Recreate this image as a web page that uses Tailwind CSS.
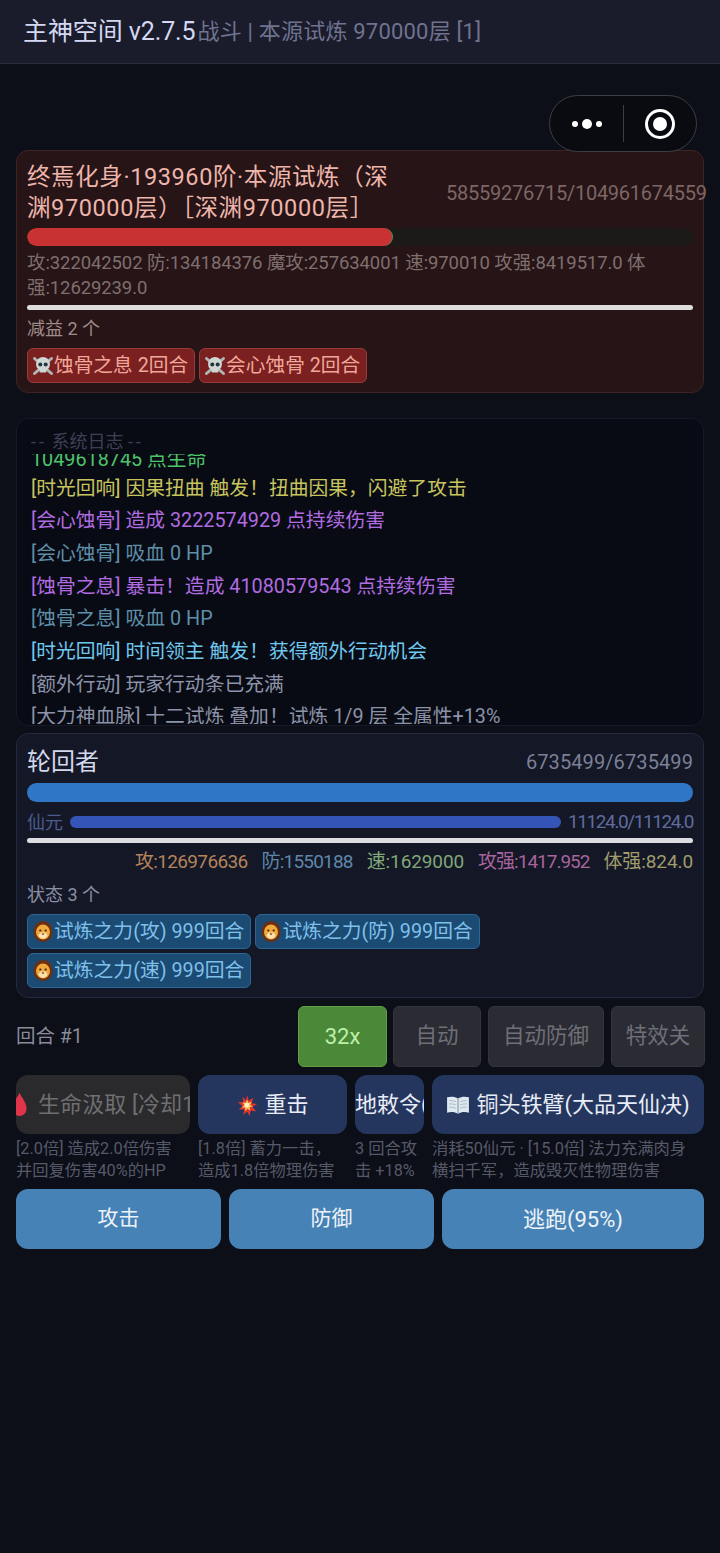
<!DOCTYPE html>
<html lang="zh-CN">
<head>
  <meta charset="UTF-8" />
  <title>主神空间</title>
  <script src="https://cdn.jsdelivr.net/npm/@tailwindcss/browser@4"></script>
</head>
<body class="relative w-[720px] h-[1553px] overflow-hidden bg-[#0c0e18] font-['Roboto','Noto_Sans_CJK_SC',sans-serif] text-white">

  <!-- top bar -->
  <header class="flex items-center h-[64px] pl-[23px] bg-[#1a1c2b] border-b border-[#2a2c3e]">
    <span class="text-[25px] text-[#d4d8f2] whitespace-nowrap tracking-[-0.1px]">主神空间 v2.7.5</span>
    <span class="ml-[2px] text-[22px] text-[#6f7390] whitespace-nowrap tracking-[0.2px]">战斗 | 本源试炼 970000层 [1]</span>
  </header>

  <!-- wechat capsule -->
  <div class="absolute left-[549px] top-[95px] flex items-center w-[148px] h-[57px] rounded-full bg-[#0a0b10] border border-[#3c3d45]">
    <div class="flex items-center justify-center gap-[4px] w-[73px]">
      <span class="w-[6px] h-[6px] rounded-full bg-white"></span>
      <span class="w-[10px] h-[10px] rounded-full bg-white"></span>
      <span class="w-[6px] h-[6px] rounded-full bg-white"></span>
    </div>
    <div class="w-px h-[37px] bg-[#3c3d45]"></div>
    <div class="flex items-center justify-center flex-1">
      <div class="flex items-center justify-center w-[30px] h-[30px] rounded-full border-[3px] border-white">
        <span class="w-[14px] h-[14px] rounded-full bg-white"></span>
      </div>
    </div>
  </div>

  <main class="px-[16px] pt-[86px]">
    <!-- enemy -->
    <section class="h-[243px] px-[10px] pt-[11px] rounded-[12px] bg-[#261416] border border-[#3f2424]">
      <div class="flex items-center">
        <div class="w-[419px] shrink-0 text-[23.500px] leading-[31px] tracking-[0.6px] text-[#eeb5ab] whitespace-nowrap">终焉化身·193960阶·本源试炼（深<br>渊970000层）［深渊970000层］</div>
        <div class="text-[20px] text-[#7d6665] whitespace-nowrap tracking-[-0.25px]">58559276715/104961674559</div>
      </div>
      <div class="mt-[4px] h-[18px] rounded-full bg-[#1c1a18] overflow-hidden">
        <div class="w-[55%] h-full rounded-full bg-[#c93232] border-r border-[#4f8f5a]"></div>
      </div>
      <p class="mt-[5px] text-[18.500px] leading-[25px] text-[#7f6f6e] tracking-[-0.1px]">攻:322042502 防:134184376 魔攻:257634001 速:970010 攻强:8419517.0 体强:12629239.0</p>
      <div class="mt-[4px] h-[5px] rounded-full bg-[#dddddd]"></div>
      <p class="mt-[7px] text-[18px] leading-[24px] text-[#a08c8a]">减益 2 个</p>
      <div class="flex gap-[4px] mt-[7px]">
        <span class="flex items-center h-[35px] pl-[4px] pr-[6px] rounded-[6px] bg-[#7a2020] border border-[#983a3a] text-[19.700px] text-[#f0a79a] whitespace-nowrap">
          <svg class="w-[22px] h-[22px]" viewBox="0 0 22 22"><g stroke="#aeb8b4" stroke-width="3" stroke-linecap="round"><path d="M2.500 3.500l17 15M19.500 3.500l-17 15"/></g><circle cx="11" cy="9" r="7" fill="#cfd6d3"/><rect x="7.500" y="13" width="7" height="4.500" rx="1" fill="#cfd6d3"/><circle cx="8.300" cy="9.500" r="2" fill="#22343c"/><circle cx="13.700" cy="9.500" r="2" fill="#22343c"/></svg>蚀骨之息 2回合</span>
        <span class="flex items-center h-[35px] pl-[4px] pr-[6px] rounded-[6px] bg-[#7a2020] border border-[#983a3a] text-[19.700px] text-[#f0a79a] whitespace-nowrap">
          <svg class="w-[22px] h-[22px]" viewBox="0 0 22 22"><g stroke="#aeb8b4" stroke-width="3" stroke-linecap="round"><path d="M2.500 3.500l17 15M19.500 3.500l-17 15"/></g><circle cx="11" cy="9" r="7" fill="#cfd6d3"/><rect x="7.500" y="13" width="7" height="4.500" rx="1" fill="#cfd6d3"/><circle cx="8.300" cy="9.500" r="2" fill="#22343c"/><circle cx="13.700" cy="9.500" r="2" fill="#22343c"/></svg>会心蚀骨 2回合</span>
      </div>
    </section>

    <!-- log -->
    <section class="mt-[25px] h-[308px] px-[14px] pt-[10px] rounded-[12px] bg-[#090b14] border border-[#171a26]">
      <p class="text-[18px] leading-[25px] text-[#3d4054]"><span class="tracking-[3px]">--</span> 系统日志 <span class="tracking-[3px]">--</span></p>
      <div class="h-[270px] overflow-hidden text-[19.800px] leading-[32.700px] whitespace-nowrap">
        <div class="-mt-[8.500px]">
          <p class="leading-[27px] text-[#4ec46a]">1049618745 点生命</p>
          <p class="text-[#c7c45e]">[时光回响] 因果扭曲 触发！扭曲因果，闪避了攻击</p>
          <p class="text-[#b06ce0]">[会心蚀骨] 造成 3222574929 点持续伤害</p>
          <p class="text-[#5e8fa8]">[会心蚀骨] 吸血 0 HP</p>
          <p class="text-[#b06ce0]">[蚀骨之息] 暴击！造成 41080579543 点持续伤害</p>
          <p class="text-[#5e8fa8]">[蚀骨之息] 吸血 0 HP</p>
          <p class="text-[#6fc8ee]">[时光回响] 时间领主 触发！获得额外行动机会</p>
          <p class="text-[#8c93a8]">[额外行动] 玩家行动条已充满</p>
          <p class="text-[#8c93a8]">[大力神血脉] 十二试炼 叠加！试炼 1/9 层 全属性+13%</p>
        </div>
      </div>
    </section>

    <!-- player -->
    <section class="mt-[7px] h-[265px] px-[10px] pt-[11px] rounded-[12px] bg-[#131726] border border-[#232a40]">
      <div class="flex items-center justify-between h-[33px]">
        <span class="text-[24px] text-[#d4d8ec]">轮回者</span>
        <span class="text-[20px] text-[#7b8096] tracking-[0.1px]">6735499/6735499</span>
      </div>
      <div class="mt-[5px] h-[19px] rounded-full bg-[#2f76c6]"></div>
      <div class="flex items-center gap-[7px] mt-[8px] h-[24px]">
        <span class="text-[18px] text-[#4d5c8c]">仙元</span>
        <div class="flex-1 h-[12px] rounded-full bg-[#3554b8]"></div>
        <span class="text-[19px] text-[#5f6c9c] tracking-[-1.400px]">11124.0/11124.0</span>
      </div>
      <div class="mt-[4px] h-[5px] rounded-full bg-[#dcdde2]"></div>
      <div class="flex justify-end gap-[14px] mt-[6px] text-[19px] leading-[25px]">
        <span class="text-[#b5835a] tracking-[-0.650px]">攻:126976636</span>
        <span class="text-[#5f86a8] tracking-[-0.800px]">防:1550188</span>
        <span class="text-[#80a878] tracking-[-0.100px]">速:1629000</span>
        <span class="text-[#a8649c] tracking-[-1px]">攻强:1417.952</span>
        <span class="text-[#a09c6c] tracking-[-0.100px]">体强:824.0</span>
      </div>
      <p class="mt-[9px] text-[18px] leading-[24px] text-[#8a8fa3]">状态 3 个</p>
      <div class="flex flex-wrap gap-x-[4px] gap-y-[4px] mt-[7px] w-[520px]">
        <span class="flex items-center h-[35px] pl-[4px] pr-[6px] rounded-[6px] bg-[#1b4a73] border border-[#2d6594] text-[19.800px] text-[#7fc0ea] whitespace-nowrap">
          <svg class="w-[22px] h-[22px]" viewBox="0 0 22 22"><ellipse cx="11" cy="10.500" rx="9.500" ry="10.500" fill="#6b2f12"/><ellipse cx="11" cy="11" rx="7" ry="7.500" fill="#f2a93b"/><path d="M6.500 14c1 5 8 5 9 0l-2-2.500h-5z" fill="#fbe3b0"/><circle cx="8.300" cy="9.500" r="1.100" fill="#3a2010"/><circle cx="13.700" cy="9.500" r="1.100" fill="#3a2010"/><path d="M9.500 12.500h3L11 14.200z" fill="#5a2a12"/></svg>试炼之力(攻) 999回合</span>
        <span class="flex items-center h-[35px] pl-[4px] pr-[6px] rounded-[6px] bg-[#1b4a73] border border-[#2d6594] text-[19.800px] text-[#7fc0ea] whitespace-nowrap">
          <svg class="w-[22px] h-[22px]" viewBox="0 0 22 22"><ellipse cx="11" cy="10.500" rx="9.500" ry="10.500" fill="#6b2f12"/><ellipse cx="11" cy="11" rx="7" ry="7.500" fill="#f2a93b"/><path d="M6.500 14c1 5 8 5 9 0l-2-2.500h-5z" fill="#fbe3b0"/><circle cx="8.300" cy="9.500" r="1.100" fill="#3a2010"/><circle cx="13.700" cy="9.500" r="1.100" fill="#3a2010"/><path d="M9.500 12.500h3L11 14.200z" fill="#5a2a12"/></svg>试炼之力(防) 999回合</span>
        <span class="flex items-center h-[35px] pl-[4px] pr-[6px] rounded-[6px] bg-[#1b4a73] border border-[#2d6594] text-[19.800px] text-[#7fc0ea] whitespace-nowrap">
          <svg class="w-[22px] h-[22px]" viewBox="0 0 22 22"><ellipse cx="11" cy="10.500" rx="9.500" ry="10.500" fill="#6b2f12"/><ellipse cx="11" cy="11" rx="7" ry="7.500" fill="#f2a93b"/><path d="M6.500 14c1 5 8 5 9 0l-2-2.500h-5z" fill="#fbe3b0"/><circle cx="8.300" cy="9.500" r="1.100" fill="#3a2010"/><circle cx="13.700" cy="9.500" r="1.100" fill="#3a2010"/><path d="M9.500 12.500h3L11 14.200z" fill="#5a2a12"/></svg>试炼之力(速) 999回合</span>
      </div>
    </section>

    <!-- controls -->
    <div class="flex items-center mt-[8px] h-[61px] w-[689px]">
      <span class="text-[19.500px] text-[#8a8c98] mr-auto">回合 #1</span>
      <button class="w-[89px] h-full rounded-[6px] bg-[#4b8838] border border-[#5f9f48] text-[22px] text-[#bdf0a8]">32x</button>
      <button class="ml-[6px] w-[88px] h-full rounded-[6px] bg-[#2a2b33] border border-[#33343c] text-[21.500px] text-[#6e6f78]">自动</button>
      <button class="ml-[7px] w-[116px] h-full rounded-[6px] bg-[#2a2b33] border border-[#33343c] text-[21.500px] text-[#6e6f78]">自动防御</button>
      <button class="ml-[7px] w-[94px] h-full rounded-[6px] bg-[#2a2b33] border border-[#33343c] text-[21.500px] text-[#6e6f78]">特效关</button>
    </div>

    <!-- skills -->
    <div class="flex gap-[8px] mt-[8px]">
      <div class="w-[174px]">
        <div class="flex items-center h-[59px] rounded-[12px] bg-[#2a2a2c] overflow-hidden text-[22px] text-[#6f6f72] whitespace-nowrap">
          <svg class="shrink-0 -ml-[4px] mr-[11px] w-[15px] h-[26px]" viewBox="0 0 15 26"><path d="M7.500 1c3 6 7 9 7 16a7 7 0 0 1-14 0C.5 10 4.500 7 7.500 1z" fill="#e0344a"/></svg>
          <span class="tracking-[0.1px]">生命汲取 [冷却1]</span>
        </div>
        <p class="mt-[4px] text-[16.300px] leading-[21.500px] text-[#565a68] whitespace-nowrap">[2.0倍] 造成2.0倍伤害<br>并回复伤害40%的HP</p>
      </div>
      <div class="w-[149px]">
        <div class="flex items-center justify-center h-[59px] rounded-[12px] bg-[#24365e] text-[22px] text-[#e8ecf6] whitespace-nowrap">
          <svg class="mr-[6px] w-[22px] h-[24px]" viewBox="0 0 24 24"><path d="M12 1l2 6 5-3-2 6 6 1-5 3 4 5-6-1-1 6-3-5-4 4 1-6-6 0 4-4-5-4 6 0-1-6 4 4z" fill="#e2362c"/><path d="M12 6l1.500 3.500 3.500-1-1.500 3.500 3 1.500-3.500 1 .5 3.500-3-2-2.500 2.500 0-3.500-3.500-.5 2.500-2.500-2-3 3.500.5z" fill="#fbc15c"/><circle cx="12" cy="12" r="2.500" fill="#fff3c4"/></svg>重击</div>
        <p class="mt-[4px] text-[16.300px] leading-[21.500px] text-[#565a68] whitespace-nowrap">[1.8倍] 蓄力一击，<br>造成1.8倍物理伤害</p>
      </div>
      <div class="w-[69px]">
        <div class="flex items-center h-[59px] rounded-[12px] bg-[#24365e] overflow-hidden text-[22px] text-[#e8ecf6] whitespace-nowrap"><span>地敕令(</span></div>
        <p class="mt-[4px] text-[16.300px] leading-[21.500px] text-[#565a68] whitespace-nowrap">3 回合攻<br>击 +18%</p>
      </div>
      <div class="w-[272px]">
        <div class="flex items-center justify-center h-[59px] rounded-[12px] bg-[#24365e] text-[22px] text-[#e8ecf6] whitespace-nowrap">
          <svg class="mr-[6px] w-[24px] h-[22px]" viewBox="0 0 22 20"><path d="M11 4C8 2 4 2 1 3v14c3-1 7-1 10 1 3-2 7-2 10-1V3c-3-1-7-1-10 1z" fill="#dfe8ee"/><path d="M11 4v14" stroke="#7f99ab" stroke-width="1"/><path d="M3 6c2 0 4 0 6 1M3 9c2 0 4 0 6 1M3 12c2 0 4 0 6 1M19 6c-2 0-4 0-6 1M19 9c-2 0-4 0-6 1M19 12c-2 0-4 0-6 1" stroke="#9fb4c2" stroke-width=".8" fill="none"/></svg>铜头铁臂(大品天仙决)</div>
        <p class="mt-[4px] text-[16.300px] leading-[21.500px] text-[#565a68] whitespace-nowrap">消耗50仙元 · [15.0倍] 法力充满肉身<br>横扫千军，造成毁灭性物理伤害</p>
      </div>
    </div>

    <!-- actions -->
    <div class="flex gap-[8px] mt-[8px] h-[60px] text-[21px] text-[#eef3f8]">
      <button class="w-[205px] rounded-[12px] bg-[#4682b6]">攻击</button>
      <button class="w-[205px] rounded-[12px] bg-[#4682b6]">防御</button>
      <button class="w-[262px] rounded-[12px] bg-[#4682b6] text-[22px]">逃跑(95%)</button>
    </div>
  </main>
</body>
</html>
